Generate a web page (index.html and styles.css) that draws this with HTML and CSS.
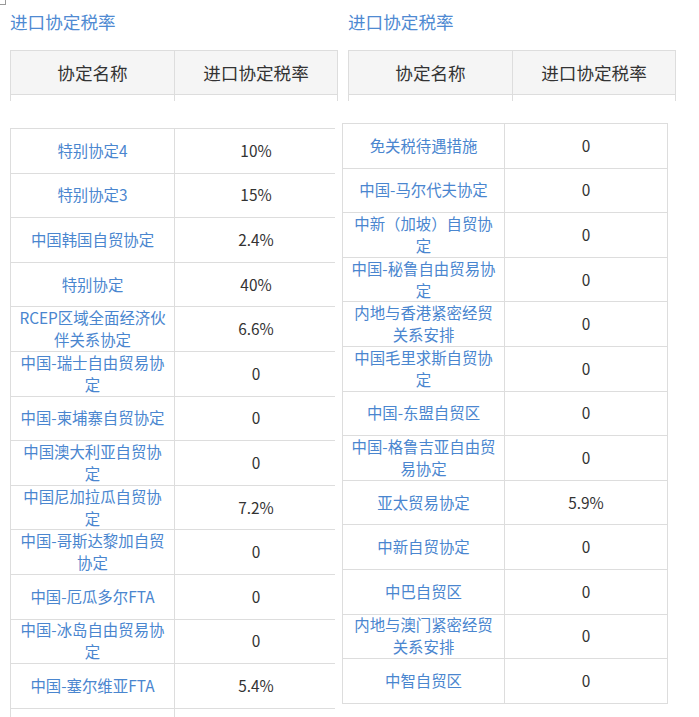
FILE: index.html
```html
<!DOCTYPE html>
<html lang="zh-CN">
<head>
<meta charset="utf-8">
<title>进口协定税率</title>
<link rel="stylesheet" href="styles.css">
</head>
<body>
<div class="page">
  <span class="corner"></span>
  <section class="col">
    <h2 class="title">进口协定税率</h2>
    <div class="head-wrap">
      <div class="grid head">
        <div class="cell">协定名称</div>
        <div class="cell">进口协定税率</div>
      </div>
      <div class="grid stub">
        <div class="cell"></div>
        <div class="cell"></div>
      </div>
    </div>
    <div class="body-wrap body-left">
      <div class="grid tbody">
        <div class="cell name">特别协定4</div><div class="cell rate">10%</div>
        <div class="cell name">特别协定3</div><div class="cell rate">15%</div>
        <div class="cell name">中国韩国自贸协定</div><div class="cell rate">2.4%</div>
        <div class="cell name">特别协定</div><div class="cell rate">40%</div>
        <div class="cell name">RCEP区域全面经济伙伴关系协定</div><div class="cell rate">6.6%</div>
        <div class="cell name">中国-瑞士自由贸易协定</div><div class="cell rate">0</div>
        <div class="cell name">中国-柬埔寨自贸协定</div><div class="cell rate">0</div>
        <div class="cell name">中国澳大利亚自贸协定</div><div class="cell rate">0</div>
        <div class="cell name">中国尼加拉瓜自贸协定</div><div class="cell rate">7.2%</div>
        <div class="cell name">中国-哥斯达黎加自贸协定</div><div class="cell rate">0</div>
        <div class="cell name">中国-厄瓜多尔FTA</div><div class="cell rate">0</div>
        <div class="cell name">中国-冰岛自由贸易协定</div><div class="cell rate">0</div>
        <div class="cell name">中国-塞尔维亚FTA</div><div class="cell rate">5.4%</div>
        <div class="cell name"></div><div class="cell rate"></div>
      </div>
    </div>
  </section>
  <section class="col">
    <h2 class="title">进口协定税率</h2>
    <div class="head-wrap">
      <div class="grid head">
        <div class="cell">协定名称</div>
        <div class="cell">进口协定税率</div>
      </div>
      <div class="grid stub">
        <div class="cell"></div>
        <div class="cell"></div>
      </div>
    </div>
    <div class="body-wrap body-right">
      <div class="grid tbody">
        <div class="cell name">免关税待遇措施</div><div class="cell rate">0</div>
        <div class="cell name">中国-马尔代夫协定</div><div class="cell rate">0</div>
        <div class="cell name">中新（加坡）自贸协定</div><div class="cell rate">0</div>
        <div class="cell name">中国-秘鲁自由贸易协定</div><div class="cell rate">0</div>
        <div class="cell name">内地与香港紧密经贸关系安排</div><div class="cell rate">0</div>
        <div class="cell name">中国毛里求斯自贸协定</div><div class="cell rate">0</div>
        <div class="cell name">中国-东盟自贸区</div><div class="cell rate">0</div>
        <div class="cell name">中国-格鲁吉亚自由贸易协定</div><div class="cell rate">0</div>
        <div class="cell name">亚太贸易协定</div><div class="cell rate">5.9%</div>
        <div class="cell name">中新自贸协定</div><div class="cell rate">0</div>
        <div class="cell name">中巴自贸区</div><div class="cell rate">0</div>
        <div class="cell name">内地与澳门紧密经贸关系安排</div><div class="cell rate">0</div>
        <div class="cell name">中智自贸区</div><div class="cell rate">0</div>
      </div>
    </div>
  </section>
</div>
</body>
</html>
```

FILE: styles.css
```css
html, body {
  margin: 0;
  padding: 0;
  background: #fff;
}

body {
  font-family: "Noto Sans CJK SC", "Noto Sans", sans-serif;
  color: #333;
}

.page {
  position: relative;
  display: flex;
  gap: 10px;
  padding-left: 10px;
  height: 717px;
  overflow: hidden;
}

.corner {
  position: absolute;
  left: 0;
  top: 0;
  width: 5px;
  height: 4px;
  border-right: 1px solid #999;
  border-bottom: 1px solid #999;
}

.col {
  flex: none;
  width: 328px;
}

.title {
  margin: 0 0 19px;
  padding-top: 13px;
  font-size: 17.6px;
  line-height: 18px;
  font-weight: normal;
  color: #4f8ad2;
  white-space: nowrap;
}

.head-wrap {
  width: 328px;
  height: 51px;
  overflow: hidden;
  box-sizing: border-box;
  border-top: 1px solid #ddd;
  border-left: 1px solid #ddd;
}

.grid {
  display: grid;
  grid-template-columns: 164px 163px;
}

.cell {
  box-sizing: border-box;
  border-right: 1px solid #ddd;
  border-bottom: 1px solid #ddd;
  display: flex;
  align-items: center;
  justify-content: center;
  text-align: center;
}

.head .cell {
  height: 44px;
  padding-bottom: 1px;
  background: #f5f5f5;
  font-size: 17.6px;
  color: #333;
}

.stub .cell {
  height: 20px;
}

.body-left {
  margin-top: 27px;
  width: 325px;
  overflow: hidden;
}

.body-right {
  margin-top: 22px;
  margin-left: -6px;
}

.tbody {
  box-sizing: border-box;
  border-top: 1px solid #ddd;
  border-left: 1px solid #ddd;
  width: 328px;
}

.body-right .tbody {
  grid-template-columns: 162px 163px;
  width: 326px;
}

.tbody .cell {
  height: 44.6px;
  padding: 0 6px 2px;
  font-size: 15.4px;
  line-height: 22px;
}

.name {
  color: #4a86cf;
}

.rate {
  color: #333;
}
```
